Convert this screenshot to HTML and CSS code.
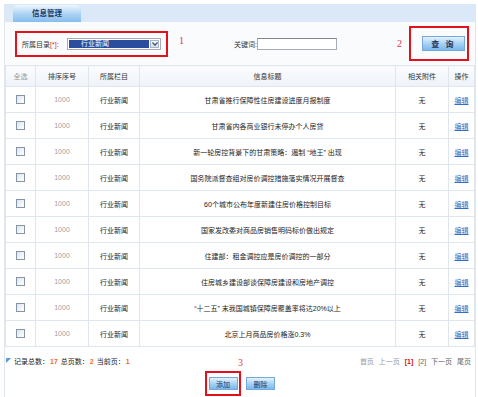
FILE: index.html
```html
<!DOCTYPE html>
<html lang="zh-CN">

<head>
    <meta charset="UTF-8">
    <title>信息管理</title>
    <link rel="stylesheet" href="styles.css">
</head>

<body>
    <div class="panel">
        <div class="tabbar">
            <div class="tab">信息管理</div>
        </div>

        <div class="search">
            <div class="mark-box cat-box">
                <span class="label">所属目录<span class="req">[*]</span>:</span>
                <div class="select">
                    <span class="select-value">行业新闻</span>
                    <span class="select-arrow">
                        <svg width="6" height="4" viewBox="0 0 6 4"><path d="M0.5 0.5 L3 3.2 L5.5 0.5" fill="none" stroke="#3d4f6a" stroke-width="1.2"/></svg>
                    </span>
                </div>
            </div>
            <span class="mark mark-1">1</span>
            <span class="kw-label">关键词:</span>
            <input class="kw-input" type="text">
            <span class="mark mark-2">2</span>
            <div class="mark-box query-box">
                <button class="btn btn-query">查 询</button>
            </div>
        </div>

        <table class="list">
            <thead>
                <tr>
                    <th class="col-check all">全选</th>
                    <th class="col-sort">排序序号</th>
                    <th class="col-cat">所属栏目</th>
                    <th class="col-title">信息标题</th>
                    <th class="col-att">相关附件</th>
                    <th class="col-op">操作</th>
                </tr>
            </thead>
            <tbody>
                <tr><td><span class="check"></span></td><td class="num">1000</td><td>行业新闻</td><td>甘肃省推行保障性住房建设进度月报制度</td><td>无</td><td><a href="#">编辑</a></td></tr>
                <tr><td><span class="check"></span></td><td class="num">1000</td><td>行业新闻</td><td>甘肃省内各商业银行未停办个人房贷</td><td>无</td><td><a href="#">编辑</a></td></tr>
                <tr><td><span class="check"></span></td><td class="num">1000</td><td>行业新闻</td><td>新一轮房控背景下的甘肃策略：遏制 “地王” 出现</td><td>无</td><td><a href="#">编辑</a></td></tr>
                <tr><td><span class="check"></span></td><td class="num">1000</td><td>行业新闻</td><td>国务院派督查组对房价调控措施落实情况开展督查</td><td>无</td><td><a href="#">编辑</a></td></tr>
                <tr><td><span class="check"></span></td><td class="num">1000</td><td>行业新闻</td><td>60个城市公布年度新建住房价格控制目标</td><td>无</td><td><a href="#">编辑</a></td></tr>
                <tr><td><span class="check"></span></td><td class="num">1000</td><td>行业新闻</td><td>国家发改委对商品房销售明码标价做出规定</td><td>无</td><td><a href="#">编辑</a></td></tr>
                <tr><td><span class="check"></span></td><td class="num">1000</td><td>行业新闻</td><td>住建部：租金调控应是房价调控的一部分</td><td>无</td><td><a href="#">编辑</a></td></tr>
                <tr><td><span class="check"></span></td><td class="num">1000</td><td>行业新闻</td><td>住房城乡建设部谈保障房建设和房地产调控</td><td>无</td><td><a href="#">编辑</a></td></tr>
                <tr><td><span class="check"></span></td><td class="num">1000</td><td>行业新闻</td><td>“十二五” 末我国城镇保障房覆盖率将达20%以上</td><td>无</td><td><a href="#">编辑</a></td></tr>
                <tr><td><span class="check"></span></td><td class="num">1000</td><td>行业新闻</td><td>北京上月商品房价格涨0.3%</td><td>无</td><td><a href="#">编辑</a></td></tr>
            </tbody>
        </table>

        <div class="pager">
            <div class="stats">
                <span class="dot"></span>
                记录总数：<b>17</b> 总页数：<b>2</b> 当前页：<b>1</b>
            </div>
            <div class="pages">
                <span>首页</span>
                <span>上一页</span>
                <b class="cur">[1]</b>
                <a href="#">[2]</a>
                <a href="#">下一页</a>
                <a href="#">尾页</a>
            </div>
        </div>

        <div class="actions">
            <div class="mark-box add-box">
                <span class="mark mark-3">3</span>
                <button class="btn btn-small">添加</button>
            </div>
            <button class="btn btn-small">删除</button>
        </div>
    </div>
</body>

</html>
```

FILE: styles.css
```css
/* reset */

* {
    margin: 0;
    padding: 0;
    box-sizing: border-box;
}

body {
    font-family: "Liberation Sans", "Noto Sans CJK SC", sans-serif;
    font-size: 7px;
    color: #222;
    background-color: #fff;
}

.panel {
    margin: 4px 2px 0 4px;
    border-left: 1px solid #dfe6ee;
    border-right: 1px solid #dfe6ee;
    height: 393px;
}

/* tab bar */

.tabbar {
    height: 18px;
    background-color: #dae8f7;
    padding-left: 8px;
    display: flex;
    align-items: flex-end;
}

.tab {
    width: 68px;
    height: 17px;
    border-radius: 5px 5px 0 0;
    background: linear-gradient(#eef6fe, #a9d2f3 55%, #86bdec);
    color: #1b3766;
    font-weight: bold;
    font-size: 7.5px;
    line-height: 17px;
    text-align: center;
}

/* search */

.search {
    height: 43px;
    background-color: #f9fbfd;
    display: flex;
    align-items: center;
}

.mark-box {
    border: 2px solid #e4101c;
}

.cat-box {
    margin-left: 10px;
    width: 153px;
    height: 26px;
    display: flex;
    align-items: center;
    padding-left: 5px;
}

.label {
    color: #333;
    width: 45px;
}

.req {
    color: #e03030;
}

.select {
    width: 94px;
    height: 12px;
    border: 1px solid #a5acb5;
    background-color: #fff;
    display: flex;
    padding: 1px;
}

.select-value {
    flex: 1;
    background-color: #2b4d9e;
    color: #fff;
    line-height: 8px;
    padding-left: 12px;
}

.select-arrow {
    width: 9px;
    margin-left: 1px;
    border: 1px solid #a9b5c4;
    background: linear-gradient(#f5f8fb, #d3dde8);
    display: flex;
    align-items: center;
    justify-content: center;
}

.mark {
    color: #e2383e;
    font-family: "Liberation Serif", serif;
    font-size: 10px;
}

.mark-1 {
    margin-left: 11px;
    margin-top: -6px;
}

.kw-label {
    margin-left: 50px;
    color: #333;
}

.kw-input {
    width: 80px;
    height: 12px;
    border: 1px solid #a5acb5;
    border-top-color: #7f8791;
    background-color: #fff;
}

.mark-2 {
    margin-left: 60px;
}

.query-box {
    margin-left: 7px;
    width: 60px;
    height: 35px;
    display: flex;
    align-items: center;
    padding-left: 11px;
}

.btn {
    border: 1px solid #76a9d8;
    background: linear-gradient(#e4f2fd, #a9d3f5 50%, #79b8ee);
    color: #1c3560;
    font-family: inherit;
    cursor: pointer;
}

.btn-query {
    width: 43px;
    height: 15px;
    font-size: 8px;
    font-weight: bold;
    letter-spacing: 2px;
}

/* list */

.list {
    width: 469px;
    border-collapse: collapse;
    table-layout: fixed;
}

.list th,
.list td {
    border: 1px solid #dfe6ee;
    text-align: center;
    font-weight: normal;
}

.list th {
    height: 21px;
    background: linear-gradient(#fbfcfe, #eef3f9);
    color: #333;
}

.list th.all {
    color: #999;
}

.list td {
    height: 26px;
}

.col-check { width: 30px; }
.col-sort { width: 53px; }
.col-cat { width: 51px; }
.col-title { width: 256px; }
.col-att { width: 53px; }
.col-op { width: 26px; }

.list td.num {
    color: #a0a0a0;
}

.list a {
    color: #2f6fc4;
}

.check {
    display: inline-block;
    width: 9px;
    height: 9px;
    border: 1px solid #8594a6;
    background: linear-gradient(135deg, #dfe5ec, #fff);
    vertical-align: middle;
}

/* footer */

.pager {
    margin-top: 9px;
    height: 12px;
    line-height: 12px;
    display: flex;
    justify-content: space-between;
}

.stats {
    display: flex;
    align-items: center;
    padding-left: 1px;
    color: #222;
}

.stats b {
    color: #f26b1d;
    margin: 0 3px 0 1px;
}

.dot {
    width: 5px;
    height: 5px;
    margin-right: 3px;
    margin-top: -3px;
    background: linear-gradient(135deg, #6fb3ef, #1f67b8);
    clip-path: polygon(0 0, 100% 0, 0 100%);
}

.pages {
    padding-right: 4px;
    color: #999;
}

.pages span,
.pages a,
.pages b {
    margin-left: 3px;
}

.pages a {
    color: #666;
    text-decoration: none;
}

.pages .cur {
    color: #d01010;
}

.actions {
    margin-top: 3px;
    display: flex;
    justify-content: center;
    align-items: center;
    gap: 5px;
}

.add-box {
    position: relative;
    width: 36px;
    height: 25px;
    display: flex;
    align-items: center;
    justify-content: center;
}

.mark-3 {
    position: absolute;
    top: -16px;
    right: -4px;
}

.btn-small {
    width: 29px;
    height: 13px;
    font-size: 7px;
}
```
